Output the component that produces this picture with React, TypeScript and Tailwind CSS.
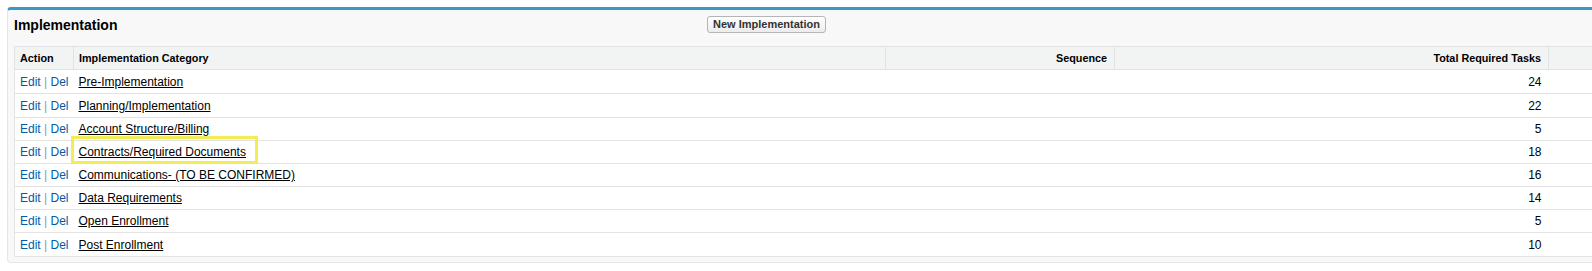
const rows = [
  { name: 'Pre-Implementation', total: 24, h: 'h-[24px]' },
  { name: 'Planning/Implementation', total: 22, h: 'h-[24px]' },
  { name: 'Account Structure/Billing', total: 5, h: 'h-[23px]' },
  { name: 'Contracts/Required Documents', total: 18, h: 'h-[23px]' },
  { name: 'Communications- (TO BE CONFIRMED)', total: 16, h: 'h-[23px]' },
  { name: 'Data Requirements', total: 14, h: 'h-[23px]' },
  { name: 'Open Enrollment', total: 5, h: 'h-[23px]' },
  { name: 'Post Enrollment', total: 10, h: 'h-[24px]' },
];

export default function App() {
  return (
    <div className="w-[1592px] h-[271px] overflow-hidden bg-white font-['Liberation_Sans',Arial,sans-serif] text-black">
      <div className="pt-[7px] pl-[7px]">
        <div className="relative w-[1660px] rounded-[4px] border border-[#e6e6e6] border-t-[3px] border-t-[#3d96c9] bg-[#f8f8f8] pl-[6px] pb-[5px]">
          {/* header: title + button */}
          <div className="flex items-center h-[29px] mb-[7px]">
            <h3 className="w-[693px] text-[14px] font-bold leading-none text-black">Implementation</h3>
            <button className="h-[17px] w-[119px] rounded-[3px] border border-[#b5b5b5] bg-linear-to-b from-white to-[#ececec] text-[11px] font-bold leading-none text-[#333]">
              New Implementation
            </button>
          </div>

          <table className="table-fixed border-collapse bg-white border border-[#e0e3e5] text-[12px]">
            <colgroup>
              <col className="w-[59px]" />
              <col className="w-[812px]" />
              <col className="w-[229px]" />
              <col className="w-[434px]" />
              <col className="w-[110px]" />
            </colgroup>
            <thead>
              <tr className="h-[23px] bg-[#f2f3f3] text-[10.8px] font-bold">
                <th className="pl-[5px] text-left border-b border-[#e0e3e5]">Action</th>
                <th className="pl-[5px] text-left border-b border-l border-[#e0e3e5]">Implementation Category</th>
                <th className="pr-[7px] text-right border-b border-l border-[#e0e3e5]">Sequence</th>
                <th className="pr-[7px] text-right border-b border-l border-[#e0e3e5]">Total Required Tasks</th>
                <th className="border-b border-l border-[#e0e3e5]"></th>
              </tr>
            </thead>
            <tbody>
              {rows.map((r) => (
                <tr key={r.name} className={`${r.h} border-b border-[#e3e3e3]`}>
                  <td className="pl-[5px] whitespace-nowrap text-[#015ba7]">
                    <a>Edit</a> <span className="text-[#7f9bb8]">|</span> <a>Del</a>
                  </td>
                  <td className="pl-[5px]">
                    <a className="underline text-black">{r.name}</a>
                  </td>
                  <td></td>
                  <td className="pr-[7px] text-right">{r.total}</td>
                  <td></td>
                </tr>
              ))}
            </tbody>
          </table>

          {/* yellow annotation box */}
          <div className="absolute left-[63px] top-[126px] w-[187px] h-[28px] border-[3px] border-[#f4ec55]" />
        </div>
      </div>
    </div>
  );
}
